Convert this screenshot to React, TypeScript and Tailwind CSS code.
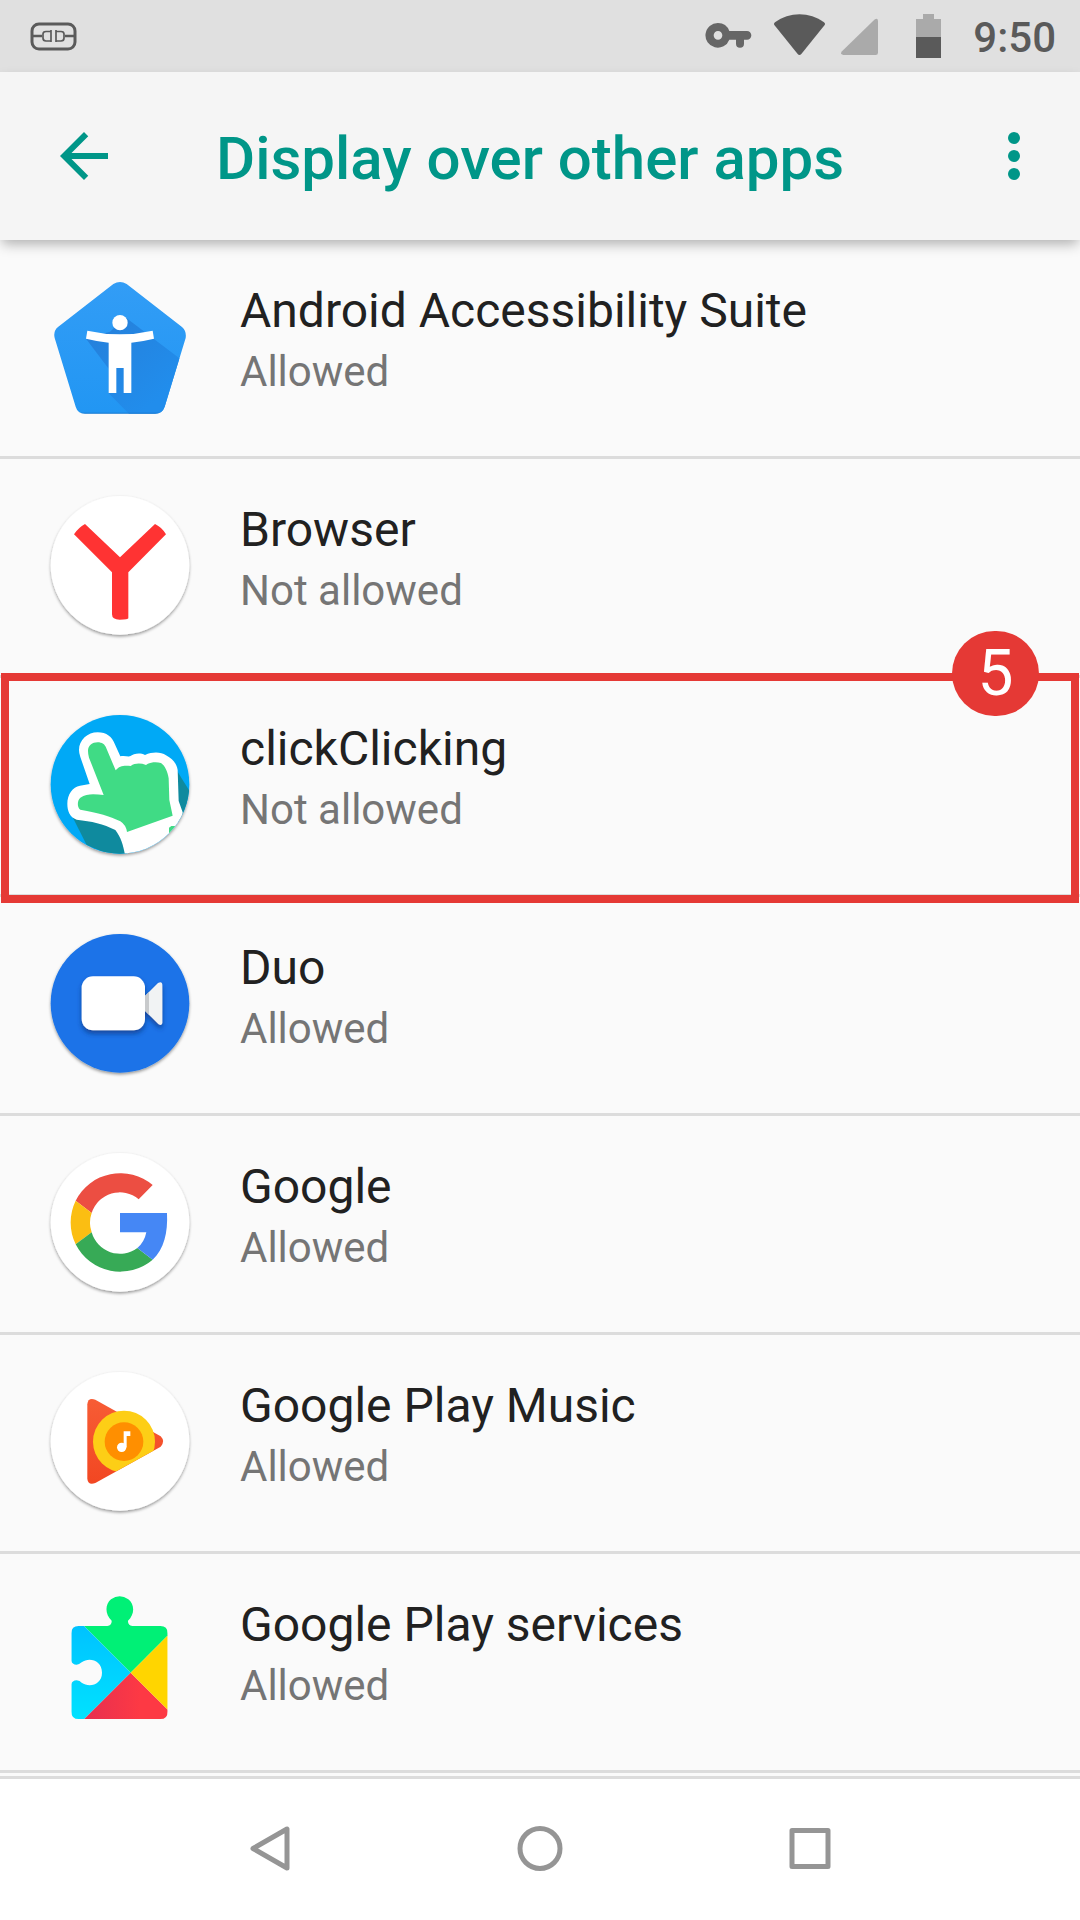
import type { ReactNode } from "react";

function AccessibilityIcon() {
  return (
    <svg viewBox="0 -6 540 540" className="size-[180px] shrink-0" aria-hidden="true">
      <defs>
        <linearGradient id="penta" x1="0" y1="0" x2="0" y2="1">
          <stop offset="0" stopColor="#339df6" />
          <stop offset="1" stopColor="#2196f3" />
        </linearGradient>
        <linearGradient id="pentaShade" gradientUnits="userSpaceOnUse" x1="220" y1="200" x2="400" y2="400">
          <stop offset="0" stopColor="#2581dc" />
          <stop offset="1" stopColor="#218dec" />
        </linearGradient>
        <clipPath id="pentaClip">
          <path d="M250 72Q270 60 290 72L456 201Q470 213 467 234L404 440Q397 461 375 461H165Q143 461 137 440L74 234Q69 213 84 201Z" />
        </clipPath>
      </defs>
      <g clipPath="url(#pentaClip)">
        <rect x="60" y="50" width="420" height="420" fill="url(#penta)" />
        <path d="M286 172L460 304V480H315L236 400V326L168 236L240 215Z" fill="url(#pentaShade)" />
        <path d="M130 458H410V462H130Z" fill="#1976c9" />
      </g>
      <circle cx="270" cy="188" r="23" fill="#fff" />
      <path d="M172 212Q270 234 368 212L372 236Q340 244 304 248V399H281V324H259V399H236V248Q200 244 168 236Z" fill="#fff" />
    </svg>
  );
}

function Disc({ id, fill, children }: { id: string; fill: string; children: ReactNode }) {
  return (
    <svg viewBox="0 3 540 540" className="size-[180px] shrink-0" aria-hidden="true">
      <defs>
        <filter id={`${id}-shadow`} x="-10%" y="-10%" width="120%" height="120%">
          <feDropShadow dx="0" dy="5" stdDeviation="4" floodColor="#000" floodOpacity="0.4" />
        </filter>
        <clipPath id={`${id}-clip`}>
          <circle cx="270" cy="268" r="208" />
        </clipPath>
      </defs>
      <circle cx="270" cy="268" r="208" fill={fill} filter={`url(#${id}-shadow)`} />
      <g clipPath={`url(#${id}-clip)`}>{children}</g>
    </svg>
  );
}

function BrowserIcon() {
  return (
    <Disc id="browser" fill="#fff">
      <path d="M132 175Q145 155 165 144L270 244L375 144Q396 154 408 175L295 289V427Q295 431 269 431Q246 431 246 415V289Z" fill="#f33" />
    </Disc>
  );
}

function ClickIcon() {
  return (
    <Disc id="click" fill="#05a9f6">
      <path d="M128 367L170 450L290 500V400L200 360Z" fill="#0f8a9e" />
      <path d="M440 226L490 306V380H430Z" fill="#0f8a9e" />
      <path d="M147 165C147 135 173 112 203 112C230 112 246 126 254 146L271 184C283 181 290 185 300 184C311 176 329 172 345 180C370 169 393 171 408 181C430 193 440 207 443 225L446 318L458 352L460 400L380 480H285C280 452 273 427 256 405C220 386 185 379 140 374C119 366 112 348 112 326C112 299 128 275 150 272L179 267L151 186Q147 175 147 165Z" fill="#fff" />
      <path d="M174 168C174 151 187 142 203 142C216 142 225 148 229 160L257 226C268 212 282 211 302 213C315 204 332 204 348 210C358 202 377 199 393 204C405 212 413 230 416 250L418 315L428 362L291 411Q288 390 271 379C238 362 207 355 151 344C141 337 141 317 151 308C172 294 196 298 221 300L177 188Q174 178 174 168Z" fill="#40db85" />
      <path d="M417 398L424 393H440V420H417Z" fill="#40db85" />
    </Disc>
  );
}

function DuoIcon() {
  return (
    <Disc id="duo" fill="#1a73e8">
      <defs>
        <filter id="camera-shadow" x="-20%" y="-20%" width="140%" height="160%">
          <feDropShadow dx="0" dy="10" stdDeviation="8" floodColor="#0b357b" floodOpacity="0.7" />
        </filter>
      </defs>
      <g filter="url(#camera-shadow)">
        <path d="M345 246L384 207Q397 200 397 212V325Q397 338 385 330L345 290Z" fill="#f1f3f4" />
        <path d="M345 246L357 234V302L345 290Z" fill="#c8cacc" />
        <rect x="155" y="187" width="190" height="162" rx="34" fill="#fff" />
      </g>
    </Disc>
  );
}

function GoogleIcon() {
  return (
    <Disc id="google" fill="#fff">
      <path d="M137 203A150 150 0 0 1 368 156L326 199A88 88 0 0 0 185 240Z" fill="#ec4e42" />
      <path d="M137 203A150 150 0 0 0 137 334L185 298A88 88 0 0 1 185 240Z" fill="#fbbe12" />
      <path d="M137 334A150 150 0 0 0 368 380L322 345A88 88 0 0 1 185 298Z" fill="#37aa56" />
      <path d="M270 240H411C414 300 402 348 368 380L322 345Q343 328 349 298H270Z" fill="#4587f5" />
    </Disc>
  );
}

function PlayMusicIcon() {
  return (
    <Disc id="music" fill="#fff">
      <defs>
        <clipPath id="record-edge">
          <path d="M150 100H420V268L392 284L190 396H150Z" />
        </clipPath>
        <linearGradient id="play-red" x1="0" y1="0" x2="0" y2="1">
          <stop offset="0" stopColor="#f75c35" />
          <stop offset="1" stopColor="#f24722" />
        </linearGradient>
      </defs>
      <path d="M172 157Q174 135 196 143L392 253Q407 268 392 284L196 393Q174 401 172 380Z" fill="url(#play-red)" />
      <g clipPath="url(#record-edge)">
        <circle cx="282" cy="269" r="93" fill="#fdce16" />
        <circle cx="282" cy="269" r="58" fill="#ff8f00" />
      </g>
      <circle cx="275" cy="286" r="14" fill="#fff" />
      <path d="M281 238H301V252H290V286H281Z" fill="#fff" />
    </Disc>
  );
}

function PlayServicesIcon() {
  return (
    <svg viewBox="0 -9 540 540" className="size-[180px] shrink-0" aria-hidden="true">
      <defs>
        <clipPath id="puzzle">
          <path d="M146 153H232Q246 151 245 137C224 118 225 88 243 73Q269 54 295 73C314 88 315 118 294 137Q293 151 307 153H391Q413 153 413 175V410Q413 432 391 432H146Q124 432 124 410V328Q126 317 140 316Q150 317 155 323C178 339 216 329 216 293C216 257 178 245 155 262Q147 269 140 269Q126 268 124 257V175Q124 153 146 153Z" />
        </clipPath>
        <linearGradient id="puzzle-blue" x1="0" y1="0" x2="0" y2="1">
          <stop offset="0" stopColor="#00c2ff" />
          <stop offset="1" stopColor="#00e2ff" />
        </linearGradient>
        <linearGradient id="puzzle-red" x1="0" y1="0" x2="1" y2="0">
          <stop offset="0" stopColor="#e62f50" />
          <stop offset="0.6" stopColor="#fd3944" />
        </linearGradient>
      </defs>
      <g clipPath="url(#puzzle)">
        <path d="M100 50H440V155L302 293L162 153Z" fill="#00f076" />
        <path d="M120 153H162L302 293L163 432H120Z" fill="url(#puzzle-blue)" />
        <path d="M302 293L163 432H441Z" fill="url(#puzzle-red)" />
        <path d="M302 293L440 155V431Z" fill="#ffd500" />
      </g>
    </svg>
  );
}

interface AppEntry {
  name: string;
  status: string;
  icon: ReactNode;
  step?: number;
}

const apps: AppEntry[] = [
  { name: "Android Accessibility Suite", status: "Allowed", icon: <AccessibilityIcon /> },
  { name: "Browser", status: "Not allowed", icon: <BrowserIcon /> },
  { name: "clickClicking", status: "Not allowed", icon: <ClickIcon />, step: 5 },
  { name: "Duo", status: "Allowed", icon: <DuoIcon /> },
  { name: "Google", status: "Allowed", icon: <GoogleIcon /> },
  { name: "Google Play Music", status: "Allowed", icon: <PlayMusicIcon /> },
  { name: "Google Play services", status: "Allowed", icon: <PlayServicesIcon /> },
];

function StatusBar() {
  return (
    <div className="flex h-[72px] items-center bg-[#e0e0e0] pl-[30px] pr-6 text-[#5a5a5a]">
      <svg viewBox="0 0 47 30" className="h-[30px] w-[47px]" fill="none" stroke="currentColor" aria-hidden="true">
        <rect x="2" y="3" width="43" height="25" rx="7" strokeWidth="3" />
        <path d="M2 15H12M35 15H45" strokeWidth="2.6" />
        <path d="M21 9V21M21 10.5H16Q13 10.5 13 13V17Q13 20 16 20H21M26 9V21M26 10.5H31Q34 10.5 34 13V17Q34 20 31 20H26" strokeWidth="1.7" />
      </svg>
      <div className="ml-auto flex items-center">
        <svg viewBox="135 0 141 216" className="h-[72px] w-[47px]" aria-hidden="true">
          <path fillRule="evenodd" fill="#666" d="M174 69A37 37 0 0 1 208 93H261A13 13 0 0 1 261 119H252V131A12 12 0 0 1 228 131V119H208A37 37 0 1 1 174 69ZM174 93A13 13 0 1 0 174 119A13 13 0 0 0 174 93Z" />
        </svg>
        <svg viewBox="342 0 153 216" className="ml-[22px] h-[72px] w-[51px]" aria-hidden="true">
          <path fill="currentColor" d="M345 67C388 35 449 35 492 67Q497 71 494 75L424 162Q418 168 413 162L343 75Q340 71 345 67Z" />
        </svg>
        <svg viewBox="543 0 111 216" className="ml-4 h-[72px] w-[37px]" aria-hidden="true">
          <path fill="#aaa" d="M654 62V158Q654 165 647 165H550Q539 163 546 154L643 59Q653 52 654 62Z" />
        </svg>
        <svg viewBox="768 0 75 216" className="ml-[38px] h-[72px] w-[25px]" aria-hidden="true">
          <path fill="#aaa" d="M789 42H822V57H843V112H768V57H789Z" />
          <path fill="currentColor" d="M768 111H843V174H768Z" />
        </svg>
        <span className="ml-8 pt-1 text-[42px] leading-[48px] font-medium">9:50</span>
      </div>
    </div>
  );
}

function Toolbar() {
  return (
    <header className="relative z-10 flex h-[168px] items-center bg-[#f5f5f5] pr-[30px] pl-12 text-[#009688] shadow-[0_6px_12px_-2px_rgba(0,0,0,0.3)]">
      <button type="button" aria-label="Back" className="size-[72px]">
        <svg viewBox="0 0 24 24" className="size-full" fill="currentColor" aria-hidden="true">
          <path d="M20 11H7.83l5.59-5.59L12 4l-8 8 8 8 1.41-1.41L7.83 13H20v-2z" />
        </svg>
      </button>
      <h1 className="ml-24 flex-1 pt-1.5 text-[60px] leading-[72px] font-medium">Display over other apps</h1>
      <button type="button" aria-label="More options" className="size-[72px]">
        <svg viewBox="0 0 24 24" className="size-full" fill="currentColor" aria-hidden="true">
          <circle cx="12" cy="6" r="2" />
          <circle cx="12" cy="12" r="2" />
          <circle cx="12" cy="18" r="2" />
        </svg>
      </button>
    </header>
  );
}

function AppRow({ name, status, icon, step }: AppEntry) {
  return (
    <li className="relative border-b-3 border-[#dcdcdc]">
      <button type="button" className="flex h-[216px] w-full items-center gap-[30px] pr-12 pl-[30px] text-left">
        {icon}
        <span className="flex flex-col gap-2 self-start pt-[43px]">
          <span className="text-[48px] leading-[56px] text-[#212121]">{name}</span>
          <span className="text-[42px] leading-[50px] text-[#757575]">{status}</span>
        </span>
      </button>
      {step !== undefined && (
        <div className="pointer-events-none absolute inset-x-px -top-[5px] z-10 h-[230px] border-8 border-[#e53935]">
          <span className="absolute -top-[50px] right-8 flex h-[85px] w-[87px] items-center justify-center rounded-full bg-[#e53935] text-[64px] leading-[72px] text-white">
            {step}
          </span>
        </div>
      )}
    </li>
  );
}

function NavBar() {
  return (
    <nav className="grid h-36 grid-cols-3 border-t-3 border-[#dcdcdc] bg-white px-[12.5%] pb-0.5 text-[#959595]">
      <button type="button" aria-label="Back" className="flex items-center justify-center">
        <svg viewBox="0 0 48 48" className="size-12" fill="none" stroke="currentColor" strokeWidth="5" strokeLinejoin="round" aria-hidden="true">
          <path d="M41 4V43L7 23.5Z" />
        </svg>
      </button>
      <button type="button" aria-label="Home" className="flex items-center justify-center">
        <svg viewBox="0 0 48 48" className="size-12" fill="none" stroke="currentColor" strokeWidth="5" aria-hidden="true">
          <circle cx="24" cy="23.5" r="20" />
        </svg>
      </button>
      <button type="button" aria-label="Recent apps" className="flex items-center justify-center">
        <svg viewBox="0 0 48 48" className="size-12" fill="none" stroke="currentColor" strokeWidth="5" strokeLinejoin="round" aria-hidden="true">
          <rect x="6" y="5.5" width="36" height="36" />
        </svg>
      </button>
    </nav>
  );
}

export default function App() {
  return (
    <div className="flex min-h-screen flex-col bg-[#fafafa] font-['Roboto',sans-serif]">
      <StatusBar />
      <Toolbar />
      <main className="flex-1">
        <ul>
          {apps.map((app) => (
            <AppRow key={app.name} {...app} />
          ))}
        </ul>
      </main>
      <NavBar />
    </div>
  );
}
